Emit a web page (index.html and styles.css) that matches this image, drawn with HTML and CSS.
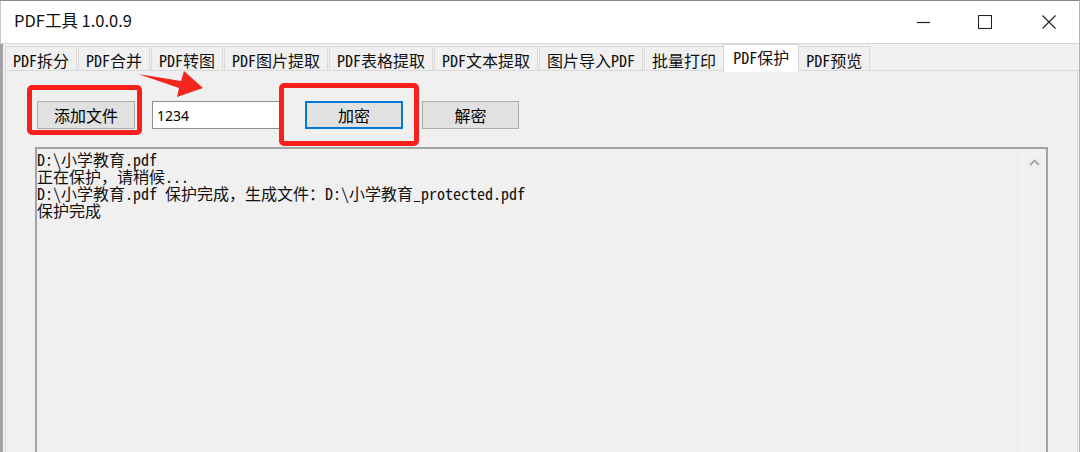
FILE: index.html
```html
<!DOCTYPE html>
<html lang="zh-CN">
<head>
<meta charset="utf-8">
<title>PDF工具 1.0.0.9</title>
<link rel="stylesheet" href="styles.css">
</head>
<body>
<div class="window">
  <header class="titlebar">
    <div class="title">PDF工具 1.0.0.9</div>
    <div class="controls">
      <svg class="ctl ctl-min" width="14" height="14" viewBox="0 0 14 14"><path d="M0 7.5H13" stroke="#222" stroke-width="1.2" fill="none"/></svg>
      <svg class="ctl ctl-max" width="14" height="14" viewBox="0 0 14 14"><rect x="0.5" y="0.5" width="13" height="13" stroke="#222" stroke-width="1.1" fill="none"/></svg>
      <svg class="ctl ctl-close" width="14" height="14" viewBox="0 0 14 14"><path d="M0.5 0.5L13.5 13.5M13.5 0.5L0.5 13.5" stroke="#222" stroke-width="1.1" fill="none"/></svg>
    </div>
  </header>
  <main class="content">
    <nav class="tabs">
      <span class="tab">PDF拆分</span>
      <span class="tab">PDF合并</span>
      <span class="tab">PDF转图</span>
      <span class="tab">PDF图片提取</span>
      <span class="tab">PDF表格提取</span>
      <span class="tab">PDF文本提取</span>
      <span class="tab">图片导入PDF</span>
      <span class="tab">批量打印</span>
      <span class="tab active">PDF保护</span>
      <span class="tab">PDF预览</span>
    </nav>
    <section class="panel">
      <div class="toolbar">
        <button class="btn btn-add">添加文件</button>
        <input class="pwd" type="text" value="1234">
        <button class="btn btn-enc">加密</button>
        <button class="btn btn-dec">解密</button>
      </div>
      <div class="log">
        <div class="log-text">
          <div class="line">D:\小学教育.pdf</div>
          <div class="line">正在保护，请稍候...</div>
          <div class="line">D:\小学教育.pdf 保护完成，生成文件：D:\小学教育_protected.pdf</div>
          <div class="line">保护完成</div>
        </div>
        <div class="scrollbar">
          <svg width="11" height="7" viewBox="0 0 11 7"><path d="M1 6L5.5 1.5L10 6" stroke="#a6a6a6" stroke-width="1.8" fill="none"/></svg>
        </div>
      </div>
      <div class="mark mark-1"></div>
      <div class="mark mark-2"></div>
      <svg class="arrow" width="80" height="35" viewBox="0 0 80 35"><polygon points="8,8 51,15 54,5 73,22 47,31 49,22" fill="#f5261e"/></svg>
    </section>
  </main>
</div>
</body>
</html>
```

FILE: styles.css
```css
* { box-sizing: border-box; }
html, body { margin: 0; padding: 0; }
body {
  width: 1080px;
  height: 452px;
  overflow: hidden;
  background: #f0f0f0;
  font-family: "Noto Sans CJK SC", "Noto Sans", sans-serif;
  color: #000;
}
.window {
  width: 1080px;
  height: 452px;
  display: flex;
  flex-direction: column;
  border-top: 1px solid #8a8a8a;
  border-right: 1px solid #b4b4b4;
  overflow: hidden;
}
.titlebar {
  height: 43px;
  flex: none;
  background: #fff;
  border-left: 1px solid #c8c8c8;
  border-bottom: 1px solid #d6d6d6;
  display: flex;
  align-items: stretch;
  padding-left: 13px;
}
.title {
  display: flex;
  align-items: center;
  padding-bottom: 4px;
  font-size: 16.5px;
  line-height: 20px;
  color: #111;
}
.controls {
  margin-left: auto;
  display: flex;
  align-items: center;
  padding-right: 23px;
}
.ctl { display: block; }
.ctl-min { margin-right: 47px; }
.ctl-max { margin-right: 50px; }

.content {
  flex: 1;
  display: flex;
  flex-direction: column;
  border-left: 3px solid #a2a2a2;
  min-height: 0;
}
.tabs {
  display: flex;
  align-items: flex-end;
  height: 26px;
  flex: none;
  padding-left: 2px;
}
.tab {
  height: 24px;
  padding: 3px 7px 0;
  line-height: 20px;
  font-family: "Noto Sans Mono CJK SC", "Noto Sans CJK SC", monospace;
  font-size: 16px;
  border: 1px solid #d9d9d9;
  border-bottom: 0;
  background: #f0f0f0;
  margin-right: 1px;
  white-space: nowrap;
  color: #111;
}
.tab.active {
  height: 28px;
  padding: 2px 9px 0;
  margin: 0 -1px -2px -2px;
  background: #fff;
  position: relative;
  z-index: 1;
}
.panel {
  position: relative;
  flex: 1;
  margin: 0 1px 0 2px;
  border: 1px solid #d9d9d9;
  padding: 30px 29px 0 29px;
  background: #f0f0f0;
}
.toolbar {
  display: flex;
  align-items: center;
  height: 28px;
  margin-left: 2px;
}
.btn {
  height: 28px;
  width: 98px;
  border: 1px solid #adadad;
  background: #e1e1e1;
  font-family: "Noto Sans CJK SC", sans-serif;
  font-size: 16px;
  line-height: 20px;
  padding: 0;
  color: #000;
}
.pwd {
  margin-left: 17px;
  width: 131px;
  height: 28px;
  border: 1px solid #8f8f8f;
  background: #fff;
  font-family: "Noto Sans", sans-serif;
  font-size: 14px;
  padding: 0 4px;
  color: #000;
  outline: none;
}
.btn-enc {
  margin-left: 22px;
  border: 2px solid #0078d7;
}
.btn-dec {
  margin-left: 19px;
  width: 97px;
}
.log {
  margin-top: 18px;
  height: 320px;
  display: flex;
  border: 2px solid #a3a3a3;
  background: #f0f0f0;
}
.log-text {
  flex: 1;
  padding: 2px 0 0 0;
  font-family: "Noto Sans Mono CJK SC", "Noto Sans CJK SC", monospace;
  font-size: 16px;
  line-height: 17px;
  color: #111;
}
.line { white-space: pre; }
.scrollbar {
  width: 24px;
  border-left: 1px solid #fbfbfb;
  display: flex;
  justify-content: center;
  align-items: flex-start;
  padding-top: 10px;
}
.scrollbar svg { display: block; }
.mark {
  position: absolute;
  border: 5px solid #f8201c;
  border-radius: 5px;
}
.mark-1 { left: 21px; top: 14px; width: 115px; height: 50px; }
.mark-2 { left: 273px; top: 12px; width: 140px; height: 63px; }
.arrow {
  position: absolute;
  left: 124px;
  top: -5px;
}
```
